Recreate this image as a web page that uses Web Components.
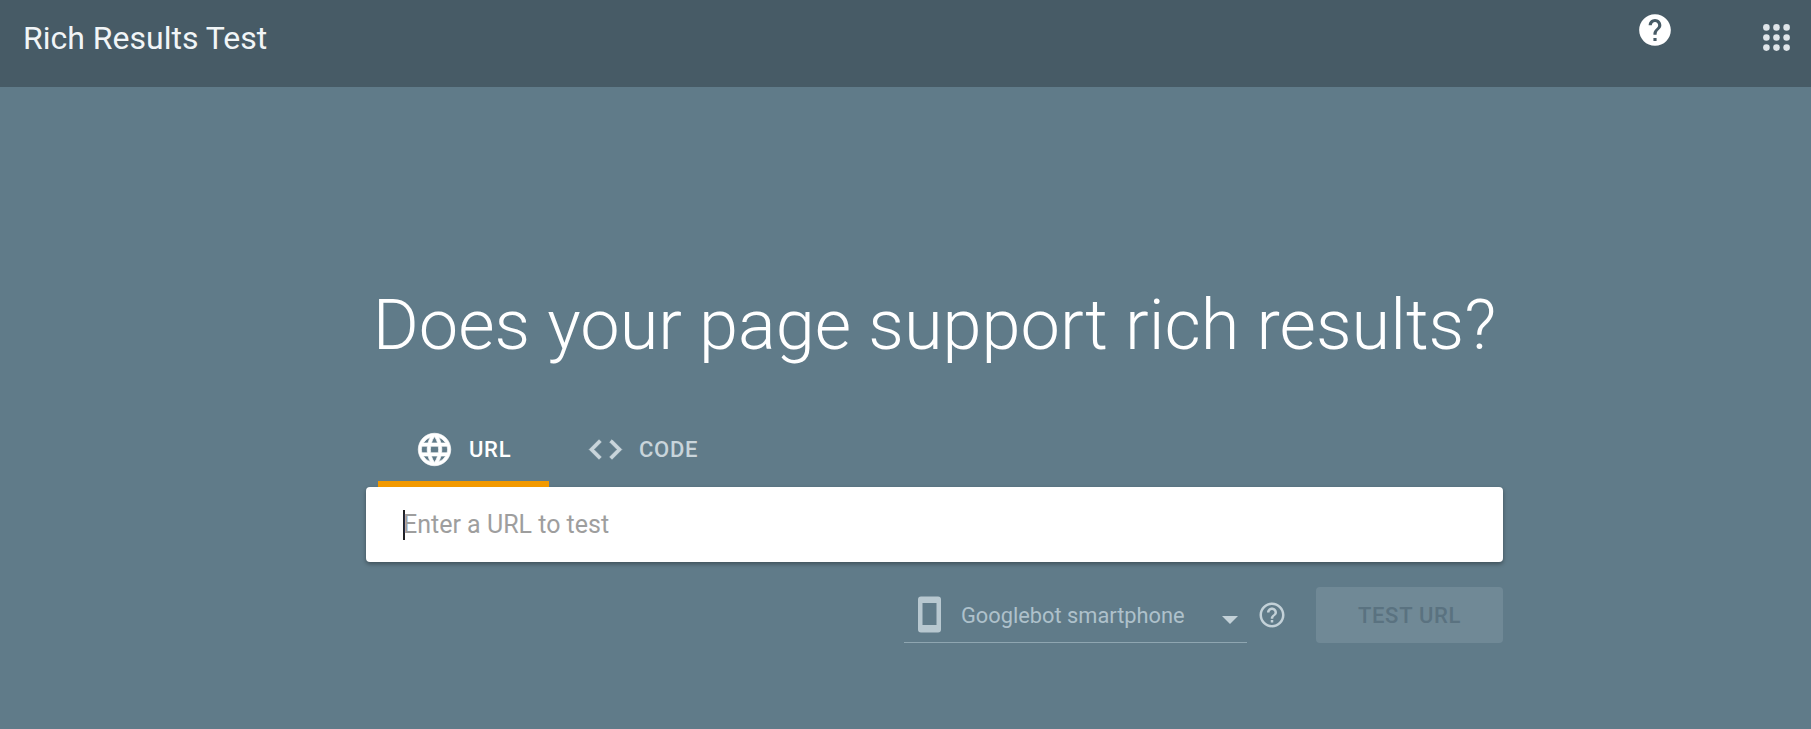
<!DOCTYPE html>
<html lang="en">
<head>
<meta charset="utf-8">
<title>Rich Results Test</title>
<style>
  html, body {
    margin: 0;
    height: 100%;
    overflow: hidden;
    background: #607b89;
    font-family: Roboto, "Liberation Sans", sans-serif;
  }
</style>
</head>
<body>
<rr-header title-text="Rich Results Test"></rr-header>
<rr-main>
  <rr-tabs></rr-tabs>
  <rr-url-input placeholder="Enter a URL to test"></rr-url-input>
  <rr-actions>
    <rr-device-select label="Googlebot smartphone"></rr-device-select>
    <rr-button>TEST URL</rr-button>
  </rr-actions>
</rr-main>

<template id="header-tpl">
  <style>
    :host {
      display: flex;
      justify-content: space-between;
      height: 87px;
      background: #475b66;
      color: #fff;
    }

    .name {
      font-size: 32px;
      line-height: 38px;
      padding: 19px 0 0 23px;
      color: #f1f5f7;
    }

    .icons {
      display: flex;
      gap: 89px;
      padding-right: 21px;
    }

    .help { width: 38px; height: 38px; margin-top: 11px; }
    .apps { width: 27px; height: 27px; margin-top: 24px; }
  </style>
  <div class="name"></div>
  <div class="icons">
    <svg class="help" viewBox="0 0 24 24"><path fill="#fff" d="M12 2C6.48 2 2 6.48 2 12s4.48 10 10 10 10-4.48 10-10S17.52 2 12 2zm1 17h-2v-2h2v2zm2.07-7.75-.9.92C13.45 12.9 13 13.5 13 15h-2v-.5c0-1.1.45-2.1 1.17-2.83l1.24-1.26c.37-.36.59-.86.59-1.41 0-1.1-.9-2-2-2s-2 .9-2 2H8c0-2.21 1.79-4 4-4s4 1.79 4 4c0 .88-.36 1.68-.93 2.25z"/></svg>
    <svg class="apps" viewBox="0 0 27 27" fill="#dfe5e9">
      <circle cx="3.4" cy="3.4" r="3.3"/><circle cx="13.5" cy="3.4" r="3.3"/><circle cx="23.6" cy="3.4" r="3.3"/>
      <circle cx="3.4" cy="13.5" r="3.3"/><circle cx="13.5" cy="13.5" r="3.3"/><circle cx="23.6" cy="13.5" r="3.3"/>
      <circle cx="3.4" cy="23.6" r="3.3"/><circle cx="13.5" cy="23.6" r="3.3"/><circle cx="23.6" cy="23.6" r="3.3"/>
    </svg>
  </div>
</template>

<template id="main-tpl">
  <style>
    :host {
      display: block;
      width: 1137px;
      margin-left: 366px;
    }

    h1 {
      margin: 0;
      padding-top: 194px;
      text-align: center;
      white-space: nowrap;
      font-size: 70.3px;
      line-height: 88px;
      font-weight: 300;
      color: #fff;
    }
  </style>
  <h1>Does your page support rich results?</h1>
  <slot></slot>
</template>

<template id="tabs-tpl">
  <style>
    :host {
      display: flex;
      margin: 38px 0 0 12px;
      height: 80px;
      font-size: 22px;
      font-weight: 500;
      letter-spacing: .7px;
    }

    .tab {
      display: flex;
      align-items: center;
      box-sizing: border-box;
      height: 80px;
      padding-top: 10px;
      border-bottom: 6px solid transparent;
      color: #c9d5db;
    }

    .tab svg { flex: none; }

    .url {
      width: 171px;
      padding-left: 37px;
      gap: 15px;
      color: #fff;
      border-bottom-color: #f29900;
    }

    .code {
      padding-left: 37px;
      gap: 14px;
    }
  </style>
  <div class="tab url">
    <svg width="39" height="39" viewBox="0 0 24 24"><path fill="#fff" stroke="#fff" stroke-width=".4" d="M11.99 2C6.47 2 2 6.48 2 12s4.47 10 9.99 10C17.52 22 22 17.52 22 12S17.52 2 11.99 2zm6.93 6h-2.95a15.65 15.65 0 0 0-1.38-3.56A8.03 8.03 0 0 1 18.92 8zM12 4.04c.83 1.2 1.48 2.53 1.91 3.96h-3.82c.43-1.43 1.08-2.76 1.91-3.96zM4.26 14C4.1 13.36 4 12.69 4 12s.1-1.36.26-2h3.38c-.08.66-.14 1.32-.14 2s.06 1.34.14 2H4.26zm.82 2h2.95c.32 1.25.78 2.45 1.38 3.56A7.987 7.987 0 0 1 5.08 16zm2.95-8H5.08a7.987 7.987 0 0 1 4.33-3.56A15.65 15.65 0 0 0 8.03 8zM12 19.96c-.83-1.2-1.48-2.53-1.91-3.96h3.82c-.43 1.43-1.08 2.76-1.91 3.96zM14.34 14H9.66c-.09-.66-.16-1.32-.16-2s.07-1.35.16-2h4.68c.09.65.16 1.32.16 2s-.07 1.34-.16 2zm.25 5.56c.6-1.11 1.06-2.31 1.38-3.56h2.95a8.03 8.03 0 0 1-4.33 3.56zM16.36 14c.08-.66.14-1.32.14-2s-.06-1.34-.14-2h3.38c.16.64.26 1.31.26 2s-.1 1.36-.26 2h-3.38z"/></svg>
    <span>URL</span>
  </div>
  <div class="tab code">
    <svg width="39" height="39" viewBox="0 0 24 24"><path fill="#c9d5db" stroke="#c9d5db" stroke-width=".5" d="M9.4 16.6 4.8 12l4.6-4.6L8 6l-6 6 6 6 1.4-1.4zm5.2 0 4.6-4.6-4.6-4.6L16 6l6 6-6 6-1.4-1.4z"/></svg>
    <span>CODE</span>
  </div>
</template>

<template id="input-tpl">
  <style>
    :host {
      display: flex;
      align-items: center;
      box-sizing: border-box;
      height: 75px;
      padding-left: 37px;
      background: #fff;
      border-radius: 4px;
      box-shadow: 0 2px 4px rgba(0, 0, 0, .35);
    }

    .caret {
      width: 2px;
      height: 30px;
      background: #202124;
    }

    .text {
      font-size: 25px;
      line-height: 32px;
      margin: 1px 0 0 -2px;
      color: #9e9e9e;
    }
  </style>
  <span class="caret"></span>
  <span class="text"></span>
</template>

<template id="actions-tpl">
  <style>
    :host {
      display: flex;
      justify-content: flex-end;
      gap: 29px;
      margin-top: 25px;
    }
  </style>
  <slot></slot>
</template>

<template id="select-tpl">
  <style>
    :host {
      display: flex;
      align-items: flex-start;
      height: 56px;
    }

    .field {
      display: flex;
      align-items: center;
      box-sizing: border-box;
      width: 343px;
      height: 56px;
      padding-left: 6px;
      border-bottom: 1px solid #8fa6b1;
      color: #aec1cb;
      font-size: 21.8px;
    }

    .label { margin: 2px 0 0 12px; flex: 1; }
    .caret { margin: 10px 9px 0 0; }
    .q { margin: 13px 0 0 10px; }
  </style>
  <div class="field">
    <svg width="39" height="39" viewBox="0 0 39 39" style="flex:none"><path fill="#b8c8d0" fill-rule="evenodd" d="M11 1.5h17a3 3 0 0 1 3 3v30a3 3 0 0 1-3 3H11a3 3 0 0 1-3-3v-30a3 3 0 0 1 3-3zM12.5 8v22h14V8h-14z"/></svg>
    <span class="label"></span>
    <svg class="caret" width="16" height="8" viewBox="0 0 16 8"><path fill="#c3d1d8" d="M0 0h16L8 8z"/></svg>
  </div>
  <svg class="q" width="30" height="30" viewBox="0 0 24 24"><path fill="#c3d1d8" d="M11 18h2v-2h-2v2zm1-16C6.48 2 2 6.48 2 12s4.48 10 10 10 10-4.48 10-10S17.52 2 12 2zm0 18c-4.41 0-8-3.59-8-8s3.59-8 8-8 8 3.59 8 8-3.59 8-8 8zm0-14c-2.21 0-4 1.79-4 4h2c0-1.1.9-2 2-2s2 .9 2 2c0 2-3 1.75-3 5h2c0-2.25 3-2.5 3-5 0-2.21-1.79-4-4-4z"/></svg>
</template>

<template id="button-tpl">
  <style>
    :host {
      display: flex;
      align-items: center;
      justify-content: center;
      width: 187px;
      height: 56px;
      border-radius: 4px;
      background: #708996;
      color: #5a7280;
      font-size: 22px;
      font-weight: 500;
      letter-spacing: .7px;
    }
  </style>
  <slot></slot>
</template>

<script>
  // small base class, every element below just clones its template
  class TplElement extends HTMLElement {
    constructor(tplId) {
      super();
      let template = document.querySelector(tplId);
      let clone = document.importNode(template.content, true);
      let shadow = this.attachShadow({ mode: 'open' });
      shadow.appendChild(clone);
    }

    setText(selector, text) {
      this.shadowRoot.querySelector(selector).textContent = text;
    }
  }

  class RrHeader extends TplElement {
    constructor() {
      super('#header-tpl');
      this.setText('.name', this.getAttribute('title-text'));
    }
  }

  class RrMain extends TplElement {
    constructor() { super('#main-tpl'); }
  }

  class RrTabs extends TplElement {
    constructor() { super('#tabs-tpl'); }
  }

  class RrUrlInput extends TplElement {
    constructor() {
      super('#input-tpl');
      this.setText('.text', this.getAttribute('placeholder'));
    }
  }

  class RrActions extends TplElement {
    constructor() { super('#actions-tpl'); }
  }

  class RrDeviceSelect extends TplElement {
    constructor() {
      super('#select-tpl');
      this.setText('.label', this.getAttribute('label'));
    }
  }

  class RrButton extends TplElement {
    constructor() { super('#button-tpl'); }
  }

  customElements.define('rr-header', RrHeader);
  customElements.define('rr-main', RrMain);
  customElements.define('rr-tabs', RrTabs);
  customElements.define('rr-url-input', RrUrlInput);
  customElements.define('rr-actions', RrActions);
  customElements.define('rr-device-select', RrDeviceSelect);
  customElements.define('rr-button', RrButton);
</script>
</body>
</html>
